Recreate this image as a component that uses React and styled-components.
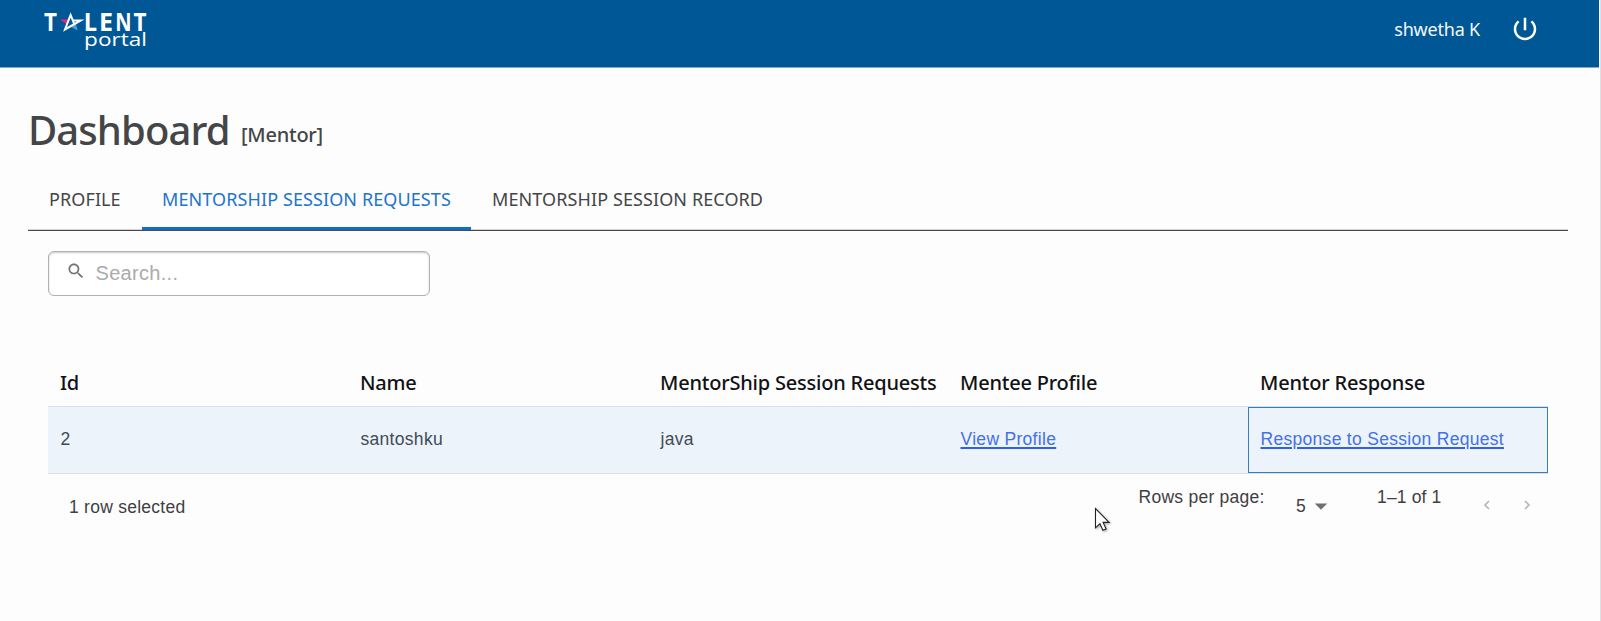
import React from 'react';
import styled, { createGlobalStyle } from 'styled-components';

const ui = "'Noto Sans', 'Open Sans', sans-serif";
const body = "'Liberation Sans', Arial, sans-serif";

const GlobalStyle = createGlobalStyle`
  * { box-sizing: border-box; }
  html, body { margin: 0; background: #fdfdfe; overflow: hidden; }
`;

const Page = styled.div`
  position: relative;
  width: 1601px;
  height: 621px;
  background: #fdfdfe;
  border-right: 1px solid #dfdfe1;
  font-family: ${body};
  color: #424344;
`;

const Header = styled.header`
  display: flex;
  align-items: flex-start;
  justify-content: space-between;
  width: 1599px;
  height: 68px;
  padding: 0 59px 0 40px;
  background: #005796;
  border-bottom: 1px solid #7fa9cb;
`;

const Logo = styled.svg`
  width: 112px;
  height: 60px;
  text {
    font-family: 'Open Sans', sans-serif;
    fill: #fff;
  }
`;

const Account = styled.div`
  display: flex;
  align-items: center;
  height: 58px;
  font: 400 18px/30px ${ui};
  letter-spacing: -0.2px;
  color: #f3f7fb;
`;

const PowerIcon = styled.svg`
  width: 30px;
  height: 30px;
  margin-left: 30px;
  fill: #fff;
`;

const Main = styled.main`
  padding: 37px 32px 0 28px;
`;

const TitleRow = styled.div`
  display: flex;
  align-items: flex-end;
  height: 50px;
`;

const Title = styled.h1`
  width: 213px;
  margin: 0;
  font: 500 40px/50px ${ui};
  letter-spacing: -0.9px;
  color: #444546;
`;

const Role = styled.span`
  margin-bottom: 5px;
  font: 500 20px/30px ${ui};
  letter-spacing: -0.25px;
  color: #444546;
`;

const Tabs = styled.nav`
  display: flex;
  height: 63px;
  margin-top: 13px;
  border-bottom: 1px solid #4d484b;
  box-shadow: inset 0 -1px 0 #d3d3d5;
`;

const Tab = styled.button`
  width: ${(p) => p.$width}px;
  height: 62px;
  padding: 0 0 0 ${(p) => p.$inset}px;
  border: 0;
  background: none;
  text-align: left;
  white-space: nowrap;
  font: 400 18px/28px ${ui};
  letter-spacing: 0.1px;
  color: ${(p) => (p.$active ? '#2273cb' : '#444546')};
  box-shadow: ${(p) => (p.$active ? 'inset 0 -3px 0 #0f6fc6' : 'none')};
`;

const Panel = styled.section`
  padding: 20px 20px 0;
`;

const SearchBox = styled.label`
  display: flex;
  align-items: center;
  width: 382px;
  height: 45px;
  padding: 0 18px 2px;
  border: 1px solid #b0b1b2;
  border-radius: 6px;
  background: #fff;
  box-shadow: inset 0 1px 2px rgba(0, 0, 0, 0.22);
`;

const SearchIcon = styled.svg`
  flex: none;
  width: 20px;
  height: 20px;
  margin: 0 9.5px 4px -1px;
  fill: #717273;
`;

const SearchInput = styled.input`
  flex: 1;
  min-width: 0;
  padding: 0;
  border: 0;
  outline: 0;
  background: none;
  font: 400 20px/24px ${body};
  letter-spacing: 0.3px;
  &::placeholder { color: #aaabac; opacity: 1; }
`;

const Grid = styled.div`
  width: 1500px;
  margin-top: 62px;
`;

const GridRow = styled.div`
  display: grid;
  grid-template-columns: repeat(5, 300px);
`;

const HeadRow = styled(GridRow)`
  height: 48px;
`;

const HeadCell = styled.div`
  display: flex;
  align-items: center;
  padding: 1px 0 0 12px;
  white-space: nowrap;
  font: 500 20px/28px ${ui};
  letter-spacing: -0.21px;
  color: #111213;
`;

const DataRow = styled(GridRow)`
  height: 68px;
  border: solid #dadfe4;
  border-width: 1px 0;
  background: #ecf3fb;
`;

const Cell = styled.div`
  display: flex;
  align-items: center;
  padding: 0 0 2px 12.5px;
  white-space: nowrap;
  font-size: 17.5px;
  line-height: 24px;
  letter-spacing: 0.3px;
  color: #424b53;
  box-shadow: ${(p) => (p.$focused ? 'inset 0 0 0 1px #337fc2' : 'none')};
`;

const Link = styled.a`
  color: #4471e3;
  text-decoration: underline #2b61ec;
  text-decoration-thickness: 1.5px;
  text-underline-offset: 2px;
`;

const Footer = styled.footer`
  display: flex;
  align-items: center;
  height: 65px;
  padding: 0 15px 0 21px;
  font-size: 17.5px;
  line-height: 24px;
  letter-spacing: 0.26px;
  color: #3f4041;
`;

const Pagination = styled.div`
  display: flex;
  align-items: center;
  height: 65px;
  margin-left: auto;
`;

const RowsLabel = styled.span`
  width: 157.5px;
  margin-bottom: 19px;
`;

const PageSize = styled.div`
  display: flex;
  align-items: center;
  width: 81px;
  margin-bottom: 1px;
`;

const DropIcon = styled.svg`
  width: 30px;
  height: 30px;
  fill: #6f7071;
`;

const Range = styled.span`
  width: 104px;
  margin-bottom: 19px;
  letter-spacing: 0.15px;
`;

const PageArrows = styled.div`
  display: flex;
  gap: 28px;
  margin-bottom: 4px;
`;

const Arrow = styled.svg`
  width: 12px;
  height: 12px;
  fill: none;
  stroke: #b5b6b8;
  stroke-width: 1.7;
`;

const Pointer = styled.svg`
  position: absolute;
  left: 1094px;
  top: 507px;
  width: 20px;
  height: 27px;
  filter: drop-shadow(1px 1px 1px rgba(0, 0, 0, 0.35));
`;

const columns = ['Id', 'Name', 'MentorShip Session Requests', 'Mentee Profile', 'Mentor Response'];

function TalentLogo() {
  return (
    <Logo viewBox="40 0 112 60" aria-label="Talent portal">
      <g fontSize="24.5" fontWeight="700">
        <text x="44" y="30.5" textLength="13" lengthAdjust="spacingAndGlyphs">T</text>
        <text x="83.7" y="30.5" textLength="13.3" lengthAdjust="spacingAndGlyphs">L</text>
        <text x="99" y="30.5" textLength="14" lengthAdjust="spacingAndGlyphs">E</text>
        <text x="115.2" y="30.5" textLength="16.3" lengthAdjust="spacingAndGlyphs">N</text>
        <text x="133.4" y="30.5" textLength="13" lengthAdjust="spacingAndGlyphs">T</text>
      </g>
      <path d="M60 19.4h8.4l-1.7 4.8z" fill="#e3258c" />
      <path d="M70.8 26.8 76 24l1.6 6.6z" fill="#4b9fd6" />
      <path d="M72.3 20.4h8.5L65 29.4l5.6-14.4 3.7 9.2" fill="none" stroke="#fff" strokeWidth="2" />
      <text x="84.1" y="46.4" fontSize="18" textLength="62.8" lengthAdjust="spacingAndGlyphs">portal</text>
    </Logo>
  );
}

export default function App() {
  return (
    <Page>
      <GlobalStyle />
      <Header>
        <TalentLogo />
        <Account>
          shwetha K
          <PowerIcon viewBox="0 0 24 24">
            <path d="M13 3h-2v10h2V3zm4.83 2.17-1.42 1.42C17.99 7.86 19 9.81 19 12c0 3.87-3.13 7-7 7s-7-3.13-7-7c0-2.19 1.01-4.14 2.58-5.42L6.17 5.17C4.23 6.82 3 9.26 3 12c0 4.97 4.03 9 9 9s9-4.03 9-9c0-2.74-1.23-5.18-3.17-6.83z" />
          </PowerIcon>
        </Account>
      </Header>
      <Main>
        <TitleRow>
          <Title>Dashboard</Title>
          <Role>[Mentor]</Role>
        </TitleRow>
        <Tabs>
          <Tab $width={114} $inset={21}>PROFILE</Tab>
          <Tab $width={329} $inset={20} $active>MENTORSHIP SESSION REQUESTS</Tab>
          <Tab $width={312} $inset={21}>MENTORSHIP SESSION RECORD</Tab>
        </Tabs>
        <Panel>
          <SearchBox>
            <SearchIcon viewBox="0 0 24 24">
              <path d="M15.5 14h-.79l-.28-.27C15.41 12.59 16 11.11 16 9.5 16 5.91 13.09 3 9.5 3S3 5.91 3 9.5 5.91 16 9.5 16c1.61 0 3.09-.59 4.23-1.57l.27.28v.79l5 4.99L20.49 19l-4.99-5zm-6 0C7.01 14 5 11.99 5 9.5S7.01 5 9.5 5 14 7.01 14 9.5 11.99 14 9.5 14z" />
            </SearchIcon>
            <SearchInput placeholder="Search..." />
          </SearchBox>
          <Grid>
            <HeadRow>
              {columns.map((c) => <HeadCell key={c}>{c}</HeadCell>)}
            </HeadRow>
            <DataRow>
              <Cell>2</Cell>
              <Cell>santoshku</Cell>
              <Cell>java</Cell>
              <Cell><Link>View Profile</Link></Cell>
              <Cell $focused><Link>Response to Session Request</Link></Cell>
            </DataRow>
          </Grid>
          <Footer>
            1 row selected
            <Pagination>
              <RowsLabel>Rows per page:</RowsLabel>
              <PageSize>
                5
                <DropIcon viewBox="0 0 24 24"><path d="m7 10 5 5 5-5z" /></DropIcon>
              </PageSize>
              <Range>1–1 of 1</Range>
              <PageArrows>
                <Arrow viewBox="0 0 12 12"><path d="M8 2 4 6l4 4" /></Arrow>
                <Arrow viewBox="0 0 12 12"><path d="m4 2 4 4-4 4" /></Arrow>
              </PageArrows>
            </Pagination>
          </Footer>
        </Panel>
      </Main>
      <Pointer viewBox="0 0 20 27">
        <path d="M1.5 1.5v19.3l4.4-4.1 3 6.6 3.2-1.4-3-6.5h6z" fill="#fff" stroke="#222" strokeWidth="1.1" />
      </Pointer>
    </Page>
  );
}
